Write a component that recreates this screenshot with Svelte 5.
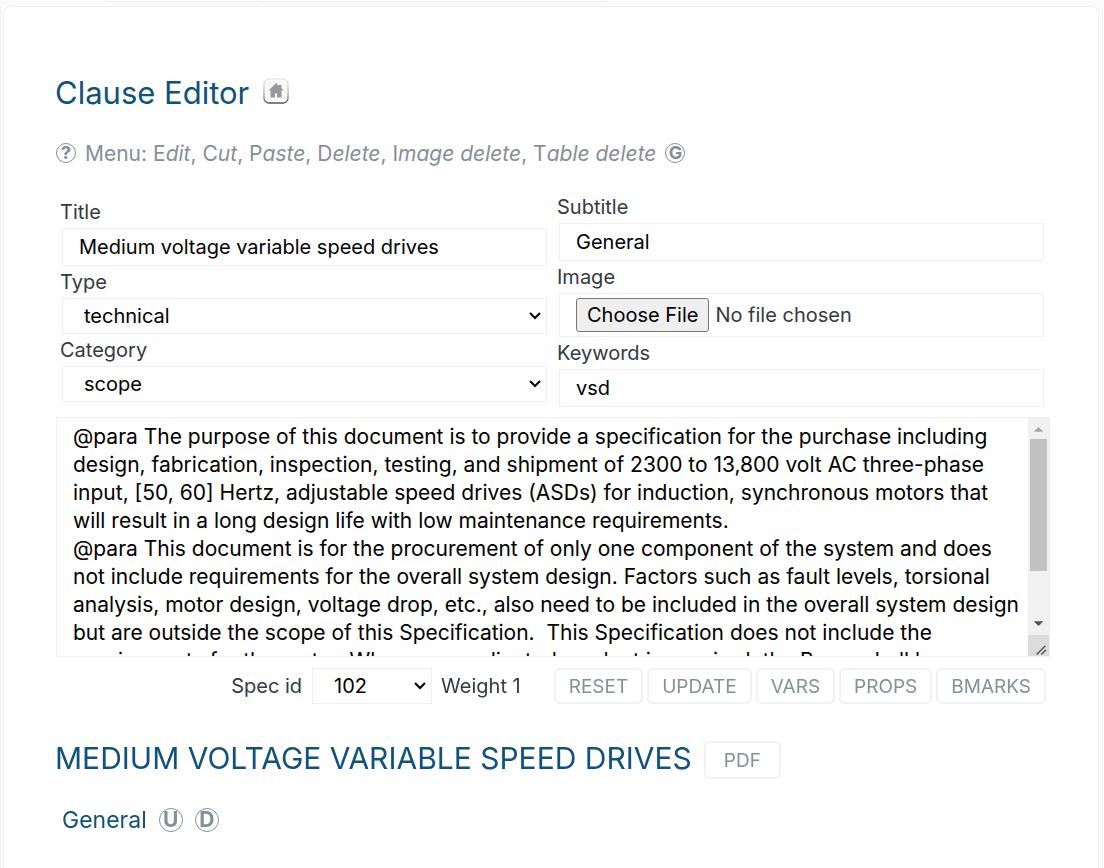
<!-- Clause editor page -->
<script lang="ts">
    let title = $state('Medium voltage variable speed drives');
    let subtitle = $state('General');
    let clauseType = $state('technical');
    let category = $state('scope');
    let keywords = $state('vsd');
    let specId = $state('102');
    let weight = $state(1);

    let body = $state(
        [
            '@para The purpose of this document is to provide a specification for the purchase including',
            'design, fabrication, inspection, testing, and shipment of 2300 to 13,800 volt AC three-phase',
            'input, [50, 60] Hertz, adjustable speed drives (ASDs) for induction, synchronous motors that',
            'will result in a long design life with low maintenance requirements.',
            '@para This document is for the procurement of only one component of the system and does',
            'not include requirements for the overall system design. Factors such as fault levels, torsional',
            'analysis, motor design, voltage drop, etc., also need to be included in the overall system design',
            'but are outside the scope of this Specification.  This Specification does not include the',
            'requirements for the motor. Where a coordinated product is required, the Buyer shall be',
            'responsible for the motor specification.'
        ].join('\n')
    );

    const menu = ['Edit', 'Cut', 'Paste', 'Delete', 'Image delete', 'Table delete'];
    const actions = ['Reset', 'Update', 'Vars', 'Props', 'Bmarks'];

    let textarea: HTMLTextAreaElement;

    function scrollLines(lines: number) {
        textarea.scrollBy({ top: lines * 28 });
    }
</script>

<div class="tabs"><span></span><span></span></div>

<div class="deck">
    <div class="side left"></div>
    <main class="card">
        <h1>
            Clause Editor
            <a class="home" href="#home" aria-label="Home">
                <svg viewBox="0 0 26 26" width="26" height="26">
                    <defs>
                        <linearGradient id="edge" x1="0" y1="0" x2="0" y2="1">
                            <stop offset="0" stop-color="#e8e8e8" />
                            <stop offset="0.6" stop-color="#b4b4b4" />
                            <stop offset="1" stop-color="#555555" />
                        </linearGradient>
                    </defs>
                    <rect x="1" y="1" width="24" height="24" rx="5" fill="#fdfdfd" stroke="url(#edge)" stroke-width="1.4" />
                    <rect x="3" y="3" width="20" height="19" rx="3" fill="#f7f7f7" />
                    <path d="M13 5 5.5 12.500h2V19.500h4.500v-4h2v4h4.500v-7h2L18.500 10V7H16v1z" fill="#97999c" />
                </svg>
            </a>
        </h1>

        <nav class="menu">
            <a class="round" href="#help">?</a>
            <span class="links">Menu:
                {#each menu as item, i}<a href="#{item.toLowerCase().replace(' ', '-')}">{item[0]}<i>{item.slice(1)}</i></a>{i < menu.length - 1 ? ', ' : ''}{/each}
            </span>
            <a class="round" href="#guide">G</a>
        </nav>

        <form onsubmit={(e) => e.preventDefault()}>
            <div class="fields">
                <div class="column lower">
                    <label for="title">Title</label>
                    <input id="title" type="text" bind:value={title} />
                    <label for="type">Type</label>
                    <select id="type" bind:value={clauseType}>
                        <option>technical</option>
                        <option>commercial</option>
                    </select>
                    <label for="category">Category</label>
                    <select id="category" bind:value={category}>
                        <option>scope</option>
                        <option>general</option>
                    </select>
                </div>
                <div class="column">
                    <label for="subtitle">Subtitle</label>
                    <input id="subtitle" type="text" bind:value={subtitle} />
                    <label for="image">Image</label>
                    <input id="image" type="file" />
                    <label for="keywords">Keywords</label>
                    <input id="keywords" type="text" bind:value={keywords} />
                </div>
            </div>

            <div class="editor">
                <textarea aria-label="Clause text" spellcheck="false" bind:this={textarea} bind:value={body}></textarea>
                <div class="rail">
                    <button type="button" aria-label="Scroll up" onclick={() => scrollLines(-1)}>
                        <svg viewBox="0 0 22 21" width="22" height="21"><path d="M6 14h10l-5-5z" fill="#a3a3a3" /></svg>
                    </button>
                    <div class="track"><div class="thumb"></div></div>
                    <button type="button" aria-label="Scroll down" onclick={() => scrollLines(1)}>
                        <svg viewBox="0 0 22 21" width="22" height="21"><path d="M6 7h10l-5 5z" fill="#505050" /></svg>
                    </button>
                    <svg class="grip" viewBox="0 0 22 21" width="22" height="21">
                        <path d="M9 20l9-9M14 20l5-5" stroke="#505050" stroke-width="1.4" />
                    </svg>
                </div>
            </div>

            <div class="toolbar">
                <label for="spec">Spec id</label>
                <select id="spec" bind:value={specId}>
                    <option>101</option>
                    <option>102</option>
                </select>
                <span class="weight">Weight {weight}</span>
                <div class="actions">
                    {#each actions as action}
                        <button type="button">{action}</button>
                    {/each}
                </div>
            </div>
        </form>

        <div class="heading">
            <h2>{title}</h2>
            <button type="button" class="pdf">PDF</button>
        </div>

        <div class="section">
            <h3>{subtitle}</h3>
            <button type="button" class="round big" aria-label="Move up">U</button>
            <button type="button" class="round big" aria-label="Move down">D</button>
        </div>
    </main>
    <div class="side right"></div>
</div>

<style>
    :global(body) {
        background: #fbfbfb;
        color: #343a40;
        font-family: Inter, sans-serif;
        font-size: 20px;
        overflow: hidden;
    }

    .tabs {
        display: flex;
        height: 6px;
        padding-left: 106px;
    }

    .tabs span {
        box-sizing: border-box;
        width: 152px;
        height: 2px;
        background: #fff;
        border: solid #efefef;
        border-width: 0 1px 1px;
        border-radius: 0 0 4px 4px;
    }

    .tabs span + span {
        width: 350px;
    }

    .deck {
        display: flex;
        gap: 2px;
        min-height: calc(100vh - 6px);
    }

    .side {
        box-sizing: border-box;
        width: 1px;
        background: #f0f0f0;
    }

    .side.right {
        width: 2px;
        margin-left: 1px;
        background: #fff;
        border-left: 1px solid #f0f0f0;
        border-radius: 4px 0 0 0;
    }

    .card {
        box-sizing: border-box;
        flex: 1;
        min-width: 0;
        padding: 64px 48px 24px 51px;
        background: #fff;
        border: 1px solid #f0f0f0;
        border-bottom: 0;
        border-radius: 8px 8px 0 0;
    }

    h1,
    h2,
    h3 {
        margin: 0;
        color: #10527a;
        font-weight: 400;
    }

    h1 {
        display: flex;
        align-items: center;
        gap: 14px;
        font-size: 31px;
        line-height: 44px;
    }

    .home {
        display: flex;
        padding-bottom: 4px;
    }

    a {
        color: inherit;
        text-decoration: none;
    }

    .menu {
        display: flex;
        align-items: center;
        gap: 9px;
        height: 24px;
        margin: 26px 0 26px 1px;
        color: #868e96;
    }

    .links {
        font-size: 21px;
    }

    .round {
        box-sizing: border-box;
        display: flex;
        align-items: center;
        justify-content: center;
        width: 20px;
        height: 20px;
        padding: 0;
        border: 1px solid #868e96;
        border-radius: 50%;
        background: none;
        color: #868e96;
        font-size: 18px;
        font-weight: 700;
        line-height: 18px;
    }

    .round.big {
        width: 24px;
        height: 24px;
        font-size: 21px;
        line-height: 22px;
    }

    .fields {
        display: grid;
        grid-template-columns: 1fr 1fr;
        gap: 12px;
        padding: 0 6px 0 7px;
    }

    .column {
        display: flex;
        flex-direction: column;
    }

    .lower {
        padding-top: 5px;
    }

    .fields label {
        align-self: flex-start;
        margin-left: -2px;
        line-height: 32px;
    }

    input,
    select,
    textarea {
        box-sizing: border-box;
        border: 1px solid #f0f0f0;
        border-radius: 0;
        outline: none;
        background-color: #fff;
        color: #000;
        font: inherit;
    }

    input {
        width: 100%;
        height: 38px;
        padding: 0 16px;
    }

    input[type='file'] {
        height: 44px;
        padding: 4px 16px;
        color: #343a40;
    }

    input::file-selector-button {
        box-sizing: border-box;
        height: 34px;
        margin: 0 6px 0 0;
        padding: 0 10px;
        border: 1px solid #767676;
        border-radius: 3px;
        background: #efefef;
        color: #000;
        font: inherit;
    }

    select {
        width: 100%;
        height: 36px;
        padding: 0 24px 0 21px;
        appearance: none;
        background-image: url("data:image/svg+xml,%3Csvg xmlns='http://www.w3.org/2000/svg' viewBox='0 0 12 8'%3E%3Cpath d='M1 1l5 5 5-5' fill='none' stroke='%23000' stroke-width='2'/%3E%3C/svg%3E");
        background-repeat: no-repeat;
        background-position: right 5px center;
        background-size: 12px 8px;
    }

    .editor {
        display: flex;
        height: 240px;
        margin: 10px 0 11px 1px;
        box-sizing: border-box;
        border: 1px solid #f0f0f0;
    }

    textarea {
        flex: 1;
        min-width: 0;
        padding: 5px 4px 5px 16px;
        border: 0;
        font-size: 21px;
        line-height: 28px;
        resize: none;
        scrollbar-width: none;
    }

    .rail {
        display: flex;
        flex-direction: column;
        width: 21px;
        background: #f1f1f1;
    }

    .rail svg {
        display: block;
        width: 100%;
    }

    .rail button {
        height: 21px;
        padding: 0;
        border: 0;
        background: none;
    }

    .track {
        flex: 1;
        padding: 0 2px;
    }

    .thumb {
        height: 85%;
        max-height: 132px;
        background: #c1c1c1;
    }

    .grip {
        background: #dcdcdc;
    }

    .toolbar {
        display: flex;
        align-items: center;
        justify-content: flex-end;
        padding-right: 4px;
    }

    .toolbar select {
        width: 120px;
        margin: 0 9px 0 10px;
    }

    .weight {
        margin-right: 33px;
    }

    .actions {
        display: flex;
        gap: 4px;
    }

    button {
        color: #868e96;
        font: inherit;
        cursor: pointer;
    }

    .actions button,
    .pdf {
        box-sizing: border-box;
        height: 36px;
        padding: 0 13px;
        border: 2px solid #f1f2f3;
        border-radius: 6px;
        background: #fff;
        font-size: 19px;
        text-transform: uppercase;
    }

    .heading {
        display: flex;
        align-items: center;
        gap: 12px;
        margin-top: 37px;
    }

    h2 {
        padding-bottom: 4px;
        font-size: 30px;
        line-height: 34px;
        text-transform: uppercase;
    }

    .heading .pdf {
        height: 38px;
        padding: 0 18px;
    }

    .section {
        display: flex;
        align-items: center;
        gap: 12px;
        margin: 25px 0 0 7px;
    }

    h3 {
        font-size: 23px;
        line-height: 32px;
    }
</style>
